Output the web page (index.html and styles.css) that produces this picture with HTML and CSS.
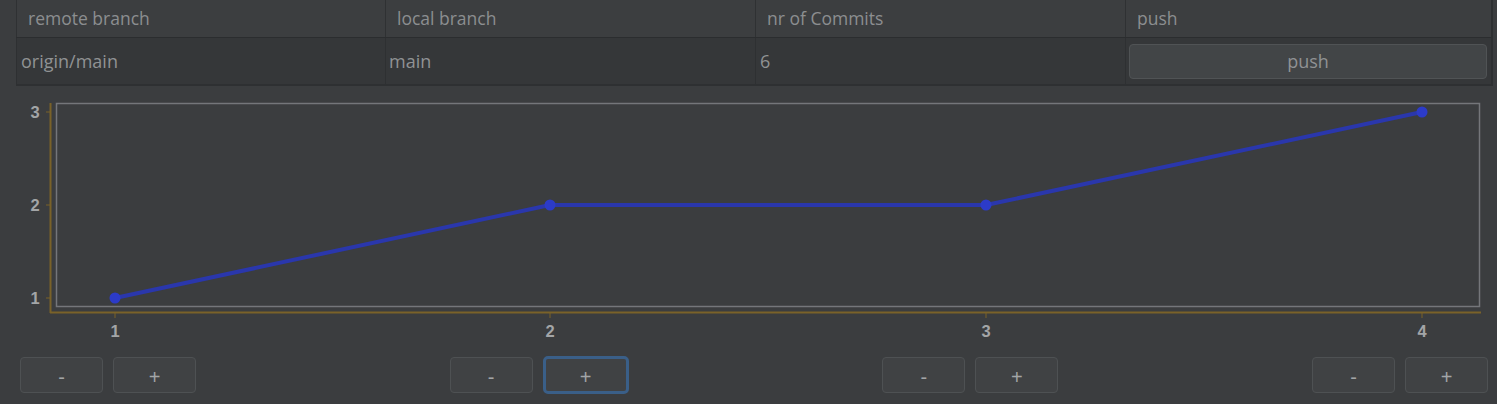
FILE: index.html
```html
<!DOCTYPE html>
<html>
<head>
<meta charset="utf-8">
<link rel="stylesheet" href="styles.css">
</head>
<body>
<div class="table">
  <div class="row head">
    <div class="cell">remote branch</div>
    <div class="cell">local branch</div>
    <div class="cell">nr of Commits</div>
    <div class="cell">push</div>
  </div>
  <div class="row body">
    <div class="cell">origin/main</div>
    <div class="cell">main</div>
    <div class="cell">6</div>
    <div class="cell btn-cell"><button class="push">push</button></div>
  </div>
</div>
<svg class="chart" width="1497" height="250" viewBox="0 0 1497 250">
  <rect x="56.5" y="7.5" width="1423" height="203" fill="none" stroke="#74767a" stroke-width="1.5"/>
  <line x1="50.5" y1="7" x2="50.5" y2="217" stroke="#7a6229" stroke-width="2"/>
  <line x1="50" y1="216.5" x2="1481" y2="216.5" stroke="#7a6229" stroke-width="2"/>
  <g stroke="#7a6229" stroke-width="1">
    <line x1="46" y1="16" x2="50" y2="16"/>
    <line x1="46" y1="109" x2="50" y2="109"/>
    <line x1="46" y1="202" x2="50" y2="202"/>
    <line x1="115" y1="217" x2="115" y2="222"/>
    <line x1="550" y1="217" x2="550" y2="222"/>
    <line x1="986" y1="217" x2="986" y2="222"/>
    <line x1="1422" y1="217" x2="1422" y2="222"/>
  </g>
  <g class="lbl" text-anchor="middle">
    <text x="35" y="22">3</text>
    <text x="35" y="115">2</text>
    <text x="35" y="208">1</text>
    <text x="115" y="241">1</text>
    <text x="550" y="241">2</text>
    <text x="986" y="241">3</text>
    <text x="1422" y="241">4</text>
  </g>
  <polyline points="115,202 550,109 986,109 1422,16" fill="none" stroke="#2a37ac" stroke-width="4" stroke-linejoin="round"/>
  <g fill="#2c3bc8">
    <circle cx="115" cy="202" r="5.5"/>
    <circle cx="550" cy="109" r="5.5"/>
    <circle cx="986" cy="109" r="5.5"/>
    <circle cx="1422" cy="16" r="5.5"/>
  </g>
</svg>
<div class="controls">
  <div class="group"><button class="ctl">-</button><button class="ctl">+</button></div>
  <div class="group"><button class="ctl">-</button><button class="ctl focus">+</button></div>
  <div class="group"><button class="ctl">-</button><button class="ctl">+</button></div>
  <div class="group"><button class="ctl">-</button><button class="ctl">+</button></div>
</div>
</body>
</html>
```
FILE: styles.css
```css
html, body {
  margin: 0;
  padding: 0;
  background: #3b3d3f;
  font-family: "Open Sans", "Liberation Sans", sans-serif;
  width: 1497px;
  height: 404px;
  overflow: hidden;
}
.table {
  margin-left: 16px;
  width: 1477px;
  border-bottom: 2px solid #2e3032;
  border-right: 2px solid #2e3032;
  box-sizing: border-box;
}
.row {
  display: grid;
  grid-template-columns: 370px 370px 370px 1fr;
}
.head {
  height: 38px;
  background: #3c3e40;
  border-bottom: 1px solid #2b2d2f;
  box-sizing: border-box;
}
.head .cell {
  padding-left: 11px;
  line-height: 37px;
  font-size: 17.5px;
  color: #8c8e90;
  border-right: 1px solid #2f3133;
}
.head .cell:first-child { border-left: 1px solid #2f3133; }
.head .cell:last-child { border-right: none; }
.body {
  height: 46px;
  background: #353739;
}
.body .cell {
  padding-left: 4px;
  line-height: 46px;
  font-size: 18px;
  color: #909294;
  border-right: 1px solid #2e3032;
}
.body .cell:first-child { border-left: 1px solid #2e3032; }
.body .cell:nth-child(2) { padding-left: 3px; }
.body .cell:last-child { border-right: none; }
.btn-cell {
  display: flex;
  align-items: center;
  padding: 0 4px 0 3px !important;
}
.push {
  width: 100%;
  height: 35px;
  background: #424547;
  border: 1px solid #505355;
  border-radius: 4px;
  color: #909294;
  font-family: "Open Sans", "Liberation Sans", sans-serif;
  font-size: 18px;
}
.chart {
  display: block;
  margin-top: 10px;
}
.lbl text {
  fill: #a3a5a7;
  font-family: "Liberation Sans", Arial, sans-serif;
  font-weight: bold;
  font-size: 16.5px;
}
.controls {
  display: flex;
  justify-content: space-between;
  padding: 0 9px 0 20px;
  margin-top: 10px;
}
.group {
  display: flex;
  gap: 10px;
  align-items: center;
}
.ctl {
  width: 83px;
  height: 36px;
  background: #404244;
  border: 1px solid #4e5153;
  border-radius: 4px;
  color: #a3a5a7;
  font-family: "Liberation Sans", Arial, sans-serif;
  font-size: 20px;
  padding-top: 6px;
  box-sizing: border-box;
}
.ctl.focus {
  width: 86px;
  height: 38px;
  border: 3px solid #3a5f88;
  border-radius: 5px;
}
```
